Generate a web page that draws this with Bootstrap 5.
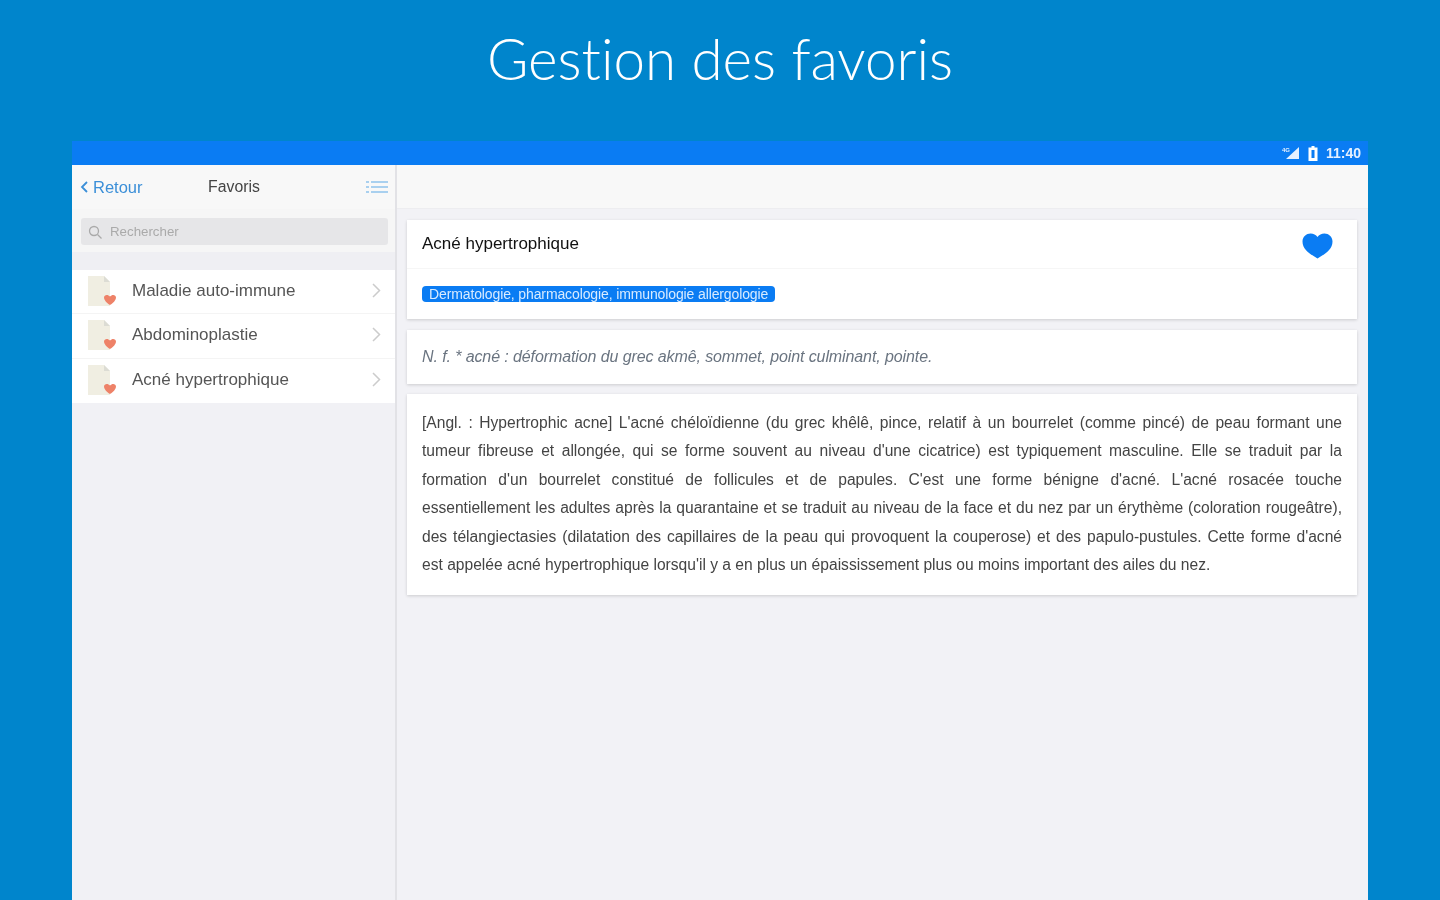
<!DOCTYPE html>
<html lang="fr">
<head>
<meta charset="utf-8">
<title>Gestion des favoris</title>
<link href="https://cdn.jsdelivr.net/npm/bootstrap@5.3.0/dist/css/bootstrap.min.css" rel="stylesheet">
<style>
html,body{height:900px;overflow:hidden}
body{background:#0085cc;font-family:"Liberation Sans",Arial,sans-serif;color:#333}
.promo-title{height:141px;padding-top:27px;text-align:center;color:#fff;font-family:Lato,sans-serif;font-weight:300;font-size:56.500px;line-height:62px;margin:0;font-variant-ligatures:none;filter:blur(.4px)}
.device{margin:0 72px;height:759px;background:#f2f2f6;overflow:hidden}
.status-bar{height:24px;background:#0a7cf3;color:#e6f1ff;font-size:14px;font-weight:700;padding-right:7px}
.panes{height:735px}
.side-pane{width:325px;background:#f1f1f5;border-right:2px solid #e2e2e6;flex:none}
.side-head{height:44px;background:#f8f8f8;padding:0 7px 0 8px;font-size:15.8px}
.back-link{color:#3b8fd8;width:100px;font-size:16.500px}
.head-title{color:#444}
.list-slot{width:100px}
.search-wrap{height:43px;padding:9px 7px 7px 9px;background:#f6f6f6}
.search-box{background:#e6e6e8;border-radius:3px;color:#aaa;font-size:13.3px;padding-left:7px}
.side-gap{height:18px;background:#efeff3}
.fav-row{height:44.3px;background:#fff;padding:0 14px 2px 15px;color:#555;font-size:17px;border-bottom:1px solid #f4f4f4}
.fav-row:last-child{border-bottom:0}
.doc-icon{margin-right:15px}
.main-pane{min-width:0}
.main-head{height:44px;background:#f8f8f8;border-bottom:1px solid #ededf0}
.main-body{padding:11px 11px 0 10px}
.sheet{background:#fff;box-shadow:0 1px 3px rgba(0,0,0,.16);margin-bottom:10.5px}
.term-top{height:49px;padding:0 24px 0 15px;border-bottom:1px solid #f6f6f6}
.term-name{font-size:17px;color:#111}
.heart-icon{margin-top:4px}
.term-tags{height:50px;padding:0 15px}
.tag-pill{background:#0a7cf3;color:#d8ebff;font-size:14px;line-height:16px;border-radius:4px;padding:0 7px;letter-spacing:-.12px}
.etym{height:54px;padding:0 15px;color:#6a7480;font-style:italic;font-size:16px;letter-spacing:-.1px}
.def-text{padding:15px 15px 16px;font-size:15.6px;line-height:28.4px;color:#444}
.def-line{display:block;text-align:justify;text-align-last:justify;white-space:nowrap}
.def-line:last-child{text-align-last:left}
.soft{filter:blur(.6px)}
</style>
</head>
<body>
<h1 class="promo-title">Gestion des favoris</h1>
<div class="device">
  <div class="status-bar d-flex align-items-center justify-content-end gap-2 soft">
    <svg width="18" height="14" viewBox="0 0 18 14"><path d="M17 1v12H4z" fill="#e6f1ff"/><text x="0" y="6" font-size="6" fill="#e6f1ff" font-family="Liberation Sans">4G</text></svg>
    <svg width="10" height="15" viewBox="0 0 10 15"><path d="M3.500 0h3v1.500H9.500V15H.5V1.500H3.500z" fill="#fff"/><rect x="3.500" y="4" width="3" height="8" fill="#0a7cf3"/></svg>
    <span>11:40</span>
  </div>
  <div class="panes d-flex">
    <aside class="side-pane">
      <div class="side-head d-flex align-items-center justify-content-between soft">
        <span class="back-link d-flex align-items-center gap-1">
          <svg width="9" height="12" viewBox="0 0 9 12"><path d="M7 1 2 6l5 5" fill="none" stroke="#3b8fd8" stroke-width="1.800"/></svg>Retour</span>
        <span class="head-title">Favoris</span>
        <span class="list-slot d-flex justify-content-end">
          <svg width="22" height="14" viewBox="0 0 22 14"><g stroke="#8fc2ec" stroke-width="1.300"><path d="M5 2h17M5 7h17M5 12h17"/><path d="M0 2h3M0 7h3M0 12h3"/></g></svg>
        </span>
      </div>
      <div class="search-wrap soft">
        <div class="search-box h-100 d-flex align-items-center gap-2">
          <svg width="14" height="14" viewBox="0 0 14 14"><circle cx="6" cy="6" r="4.500" fill="none" stroke="#aaa" stroke-width="1.300"/><path d="m9.500 9.500 4 4" stroke="#aaa" stroke-width="1.300"/></svg>
          <span>Rechercher</span>
        </div>
      </div>
      <div class="side-gap"></div>
      <div class="soft">
        <div class="fav-row d-flex align-items-center">
          <svg class="doc-icon" width="30" height="32" viewBox="0 0 30 32"><path d="M1 1h16l6 6v24H1z" fill="#f0eee2"/><path d="M17 1v6h6z" fill="#dcdcd4"/><path d="M23 30s-6-3.500-6-7.500c0-3 4-3.500 6-1 2-2.500 6-2 6 1 0 4-6 7.500-6 7.500z" fill="#ee8268"/></svg>
          <span class="flex-grow-1">Maladie auto-immune</span>
          <svg width="9" height="15" viewBox="0 0 9 15"><path d="m1 1 6.500 6.500L1 14" fill="none" stroke="#ccc" stroke-width="1.500"/></svg>
        </div>
        <div class="fav-row d-flex align-items-center">
          <svg class="doc-icon" width="30" height="32" viewBox="0 0 30 32"><path d="M1 1h16l6 6v24H1z" fill="#f0eee2"/><path d="M17 1v6h6z" fill="#dcdcd4"/><path d="M23 30s-6-3.500-6-7.500c0-3 4-3.500 6-1 2-2.500 6-2 6 1 0 4-6 7.500-6 7.500z" fill="#ee8268"/></svg>
          <span class="flex-grow-1">Abdominoplastie</span>
          <svg width="9" height="15" viewBox="0 0 9 15"><path d="m1 1 6.500 6.500L1 14" fill="none" stroke="#ccc" stroke-width="1.500"/></svg>
        </div>
        <div class="fav-row d-flex align-items-center">
          <svg class="doc-icon" width="30" height="32" viewBox="0 0 30 32"><path d="M1 1h16l6 6v24H1z" fill="#f0eee2"/><path d="M17 1v6h6z" fill="#dcdcd4"/><path d="M23 30s-6-3.500-6-7.500c0-3 4-3.500 6-1 2-2.500 6-2 6 1 0 4-6 7.500-6 7.500z" fill="#ee8268"/></svg>
          <span class="flex-grow-1">Acné hypertrophique</span>
          <svg width="9" height="15" viewBox="0 0 9 15"><path d="m1 1 6.500 6.500L1 14" fill="none" stroke="#ccc" stroke-width="1.500"/></svg>
        </div>
      </div>
    </aside>
    <main class="main-pane flex-grow-1">
      <div class="main-head"></div>
      <div class="main-body">
        <section class="sheet">
          <div class="term-top d-flex align-items-center justify-content-between">
            <span class="term-name soft">Acné hypertrophique</span>
            <svg class="heart-icon" width="31" height="26" viewBox="0 0 31 26"><path d="M15.500 25.500C9 21.500 .5 17 .5 8.500.5 3.500 4.500.5 8.500.5c3 0 5.500 1.200 7 3.500 1.500-2.300 4-3.500 7-3.500 4 0 8 3 8 8 0 8.500-8.500 13-15 17z" fill="#0a7cf3"/></svg>
          </div>
          <div class="term-tags d-flex align-items-center soft"><span class="tag-pill">Dermatologie, pharmacologie, immunologie allergologie</span></div>
        </section>
        <section class="sheet etym d-flex align-items-center soft">N. f. * acné : déformation du grec akmê, sommet, point culminant, pointe.</section>
        <section class="sheet def-text soft">
          <span class="def-line">[Angl. : Hypertrophic acne] L'acné chéloïdienne (du grec khêlê, pince, relatif à un bourrelet (comme pincé) de peau formant une</span>
          <span class="def-line">tumeur fibreuse et allongée, qui se forme souvent au niveau d'une cicatrice) est typiquement masculine. Elle se traduit par la</span>
          <span class="def-line">formation d'un bourrelet constitué de follicules et de papules. C'est une forme bénigne d'acné. L'acné rosacée touche</span>
          <span class="def-line">essentiellement les adultes après la quarantaine et se traduit au niveau de la face et du nez par un érythème (coloration rougeâtre),</span>
          <span class="def-line">des télangiectasies (dilatation des capillaires de la peau qui provoquent la couperose) et des papulo-pustules. Cette forme d'acné</span>
          <span class="def-line">est appelée acné hypertrophique lorsqu'il y a en plus un épaississement plus ou moins important des ailes du nez.</span>
        </section>
      </div>
    </main>
  </div>
</div>
<script src="https://cdn.jsdelivr.net/npm/bootstrap@5.3.0/dist/js/bootstrap.bundle.min.js"></script>
</body>
</html>
